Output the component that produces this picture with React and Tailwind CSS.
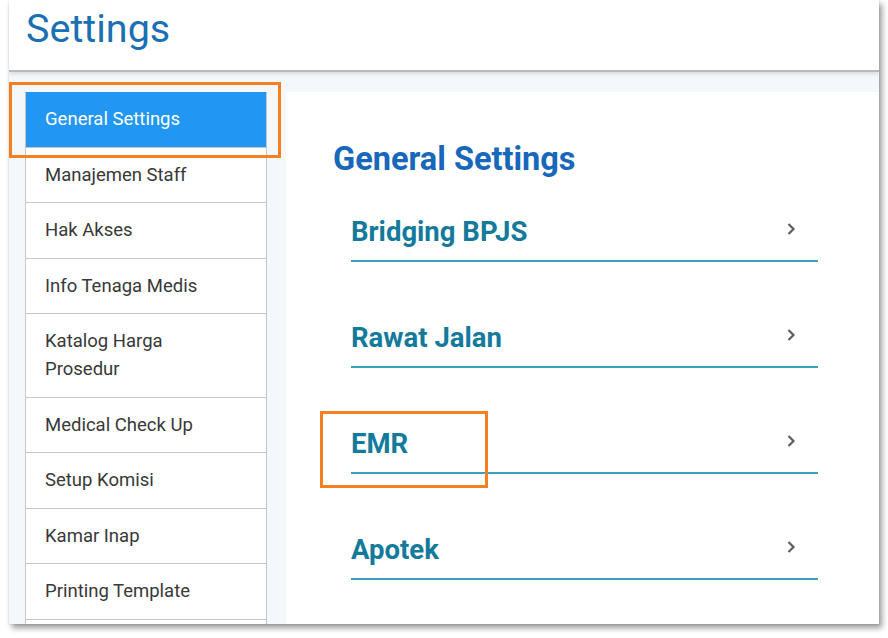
const menu = [
  'General Settings',
  'Manajemen Staff',
  'Hak Akses',
  'Info Tenaga Medis',
  'Katalog Harga Prosedur',
  'Medical Check Up',
  'Setup Komisi',
  'Kamar Inap',
  'Printing Template',
];

const sections = ['Bridging BPJS', 'Rawat Jalan', 'EMR', 'Apotek'];

function Chevron() {
  return (
    <svg width="10" height="14" viewBox="0 0 10 14" className="mb-[6px] mr-[22px]">
      <polyline points="2.5,2 7.5,7 2.5,12" fill="none" stroke="#5f5f5f" strokeWidth="2.2" />
    </svg>
  );
}

export default function App() {
  return (
    <div className="relative w-[888px] h-[638px] bg-white overflow-hidden font-['Roboto',sans-serif]">
      <div className="ml-[9px] w-[870px] h-[624px] flex flex-col overflow-hidden bg-[#f4f8fb] shadow-[3px_4px_6px_rgba(0,0,0,0.4),0_0_2px_rgba(0,0,0,0.15)]">
        {/* Header */}
        <header className="relative z-10 h-[72px] shrink-0 bg-white border-b-2 border-[#b9b9b9] shadow-[0_2px_4px_rgba(0,0,0,0.12)]">
          <h1 className="pl-[17px] pt-[5px] text-[39.5px] leading-[48px] text-[#1b6fb3]">Settings</h1>
        </header>

        <div className="flex flex-1 pt-[20px] min-h-0">
          {/* Sidebar */}
          <nav className="ml-[16px] w-[242px] shrink-0 border-x border-[#c6c6c6] bg-white">
            {menu.map((item, i) => (
              <div
                key={item}
                className={`px-[19px] py-[13.25px] text-[18.5px] leading-[28px] border-b border-[#c6c6c6] ${
                  i === 0 ? 'bg-[#2196f3] text-white' : 'text-[#383838]'
                }`}
              >
                {item === 'Katalog Harga Prosedur' ? (
                  <>
                    Katalog Harga
                    <br />
                    Prosedur
                  </>
                ) : (
                  item
                )}
              </div>
            ))}
            <div className="h-[55px]" />
          </nav>

          {/* Content card */}
          <main className="ml-[19px] flex-1 bg-white rounded-tl-[4px]">
            <h2 className="pl-[47px] pt-[47px] text-[32.5px] leading-[40px] font-bold text-[#1767bb]">
              General Settings
            </h2>
            <div className="ml-[65px] w-[467px] mt-[35px] flex flex-col gap-[58px]">
              {sections.map((s) => (
                <div key={s} className="flex items-center justify-between pb-[10px] border-b-2 border-[#3c9fbf]">
                  <span className="text-[27.5px] leading-[36px] font-bold text-[#137a9b]">{s}</span>
                  <Chevron />
                </div>
              ))}
            </div>
          </main>
        </div>
      </div>

      {/* Annotation boxes */}
      <div className="absolute left-[9px] top-[82px] w-[272px] h-[76px] border-[3px] border-[#f6801f]" />
      <div className="absolute left-[320px] top-[411px] w-[168px] h-[77px] border-[3px] border-[#f6801f]" />
    </div>
  );
}
